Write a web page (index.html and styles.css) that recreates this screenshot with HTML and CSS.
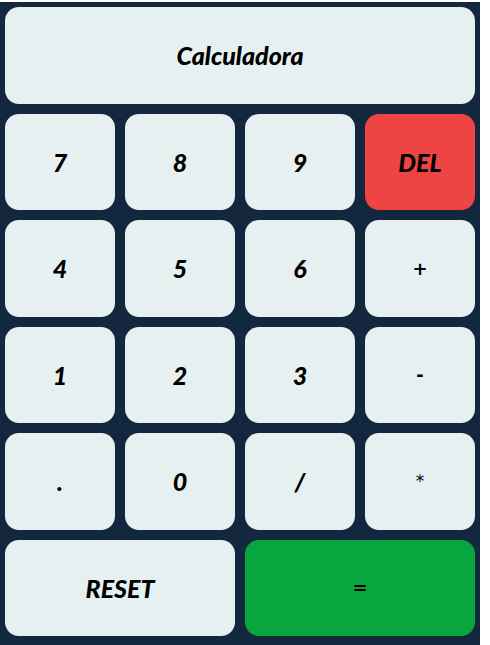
FILE: index.html
```html
<!DOCTYPE html>
<html lang="es">
<head>
<meta charset="utf-8">
<title>Calculadora</title>
<link rel="stylesheet" href="styles.css">
</head>
<body>
<div class="calc">
  <button class="key title">Calculadora</button>
  <button class="key">7</button>
  <button class="key">8</button>
  <button class="key">9</button>
  <button class="key del">DEL</button>
  <button class="key">4</button>
  <button class="key">5</button>
  <button class="key">6</button>
  <button class="key op">+</button>
  <button class="key">1</button>
  <button class="key">2</button>
  <button class="key">3</button>
  <button class="key op">-</button>
  <button class="key">.</button>
  <button class="key">0</button>
  <button class="key">/</button>
  <button class="key op star">*</button>
  <button class="key wide">RESET</button>
  <button class="key wide equals op">=</button>
</div>
</body>
</html>
```
FILE: styles.css
```css
html, body {
  margin: 0;
  padding: 0;
  background: #ffffff;
}
body {
  padding-top: 2px;
}
.calc {
  width: 480px;
  box-sizing: border-box;
  padding: 5px 5px 9px;
  background: #13283f;
  display: grid;
  grid-template-columns: repeat(4, 110px);
  grid-auto-rows: 96.5px;
  gap: 10px;
}
.key {
  border: none;
  border-radius: 14px;
  background: #e7f0f1;
  color: #000;
  font-family: "Lato", sans-serif;
  font-weight: 900;
  font-style: italic;
  font-size: 25px;
  padding: 0;
  margin: 0;
}
.op {
  font-style: normal;
  font-family: "DejaVu Sans", sans-serif;
  font-weight: 700;
  font-size: 18px;
}
.star {
  font-weight: 400;
  font-size: 17px;
}
.title {
  grid-column: 1 / -1;
}
.wide {
  grid-column: span 2;
}
.del {
  background: #ef4444;
}
.equals {
  background: #09a63f;
}
```
